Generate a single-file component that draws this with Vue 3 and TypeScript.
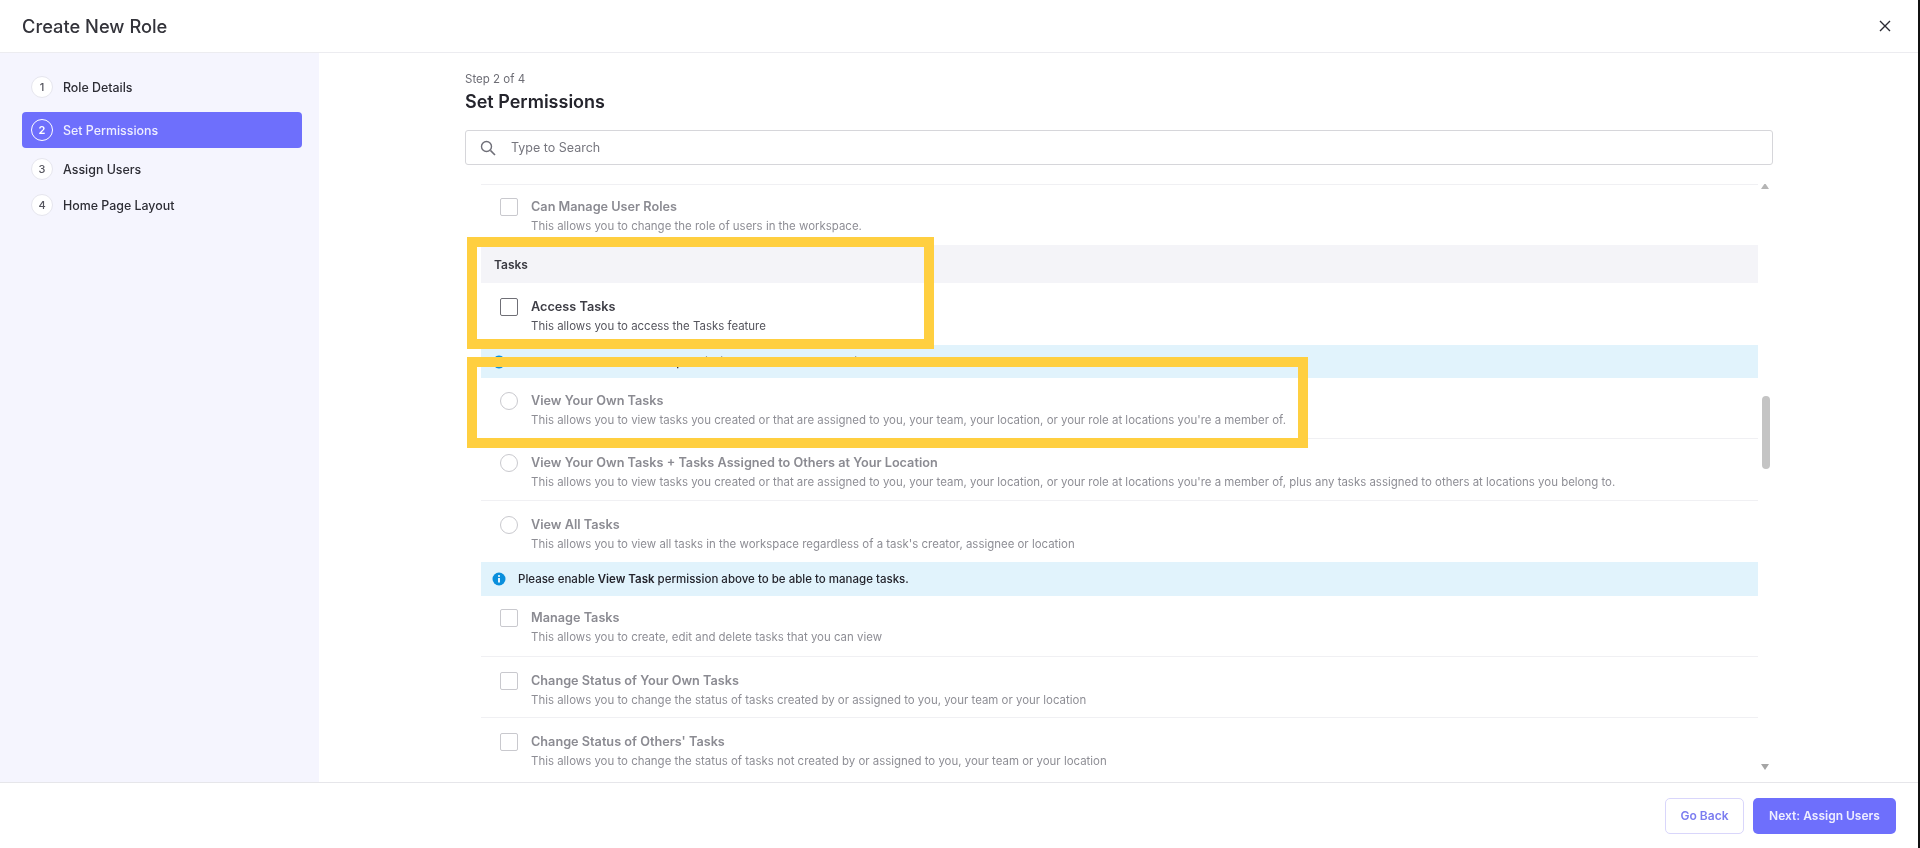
<script setup lang="ts">
interface Row { kind: 'check' | 'radio'; title: string; desc: string; plain?: boolean; tight?: boolean; first?: boolean }
const steps = ['Role Details', 'Set Permissions', 'Assign Users', 'Home Page Layout']
const views: Row[] = [
  { kind: 'radio', title: 'View Your Own Tasks', desc: "This allows you to view tasks you created or that are assigned to you, your team, your location, or your role at locations you're a member of." },
  { kind: 'radio', title: 'View Your Own Tasks + Tasks Assigned to Others at Your Location', desc: "This allows you to view tasks you created or that are assigned to you, your team, your location, or your role at locations you're a member of, plus any tasks assigned to others at locations you belong to." },
  { kind: 'radio', title: 'View All Tasks', desc: "This allows you to view all tasks in the workspace regardless of a task's creator, assignee or location", plain: true, tight: true },
]
const manages: Row[] = [
  { kind: 'check', title: 'Manage Tasks', desc: 'This allows you to create, edit and delete tasks that you can view', tight: true, first: true },
  { kind: 'check', title: 'Change Status of Your Own Tasks', desc: 'This allows you to change the status of tasks created by or assigned to you, your team or your location', tight: true },
  { kind: 'check', title: "Change Status of Others' Tasks", desc: 'This allows you to change the status of tasks not created by or assigned to you, your team or your location', plain: true, tight: true },
]
</script>

<template>
  <div class="page">
    <header class="top">
      <h1>Create New Role</h1>
      <svg class="close" viewBox="0 0 12 12" width="12" height="12"><path d="M1 1l10 10M11 1L1 11" fill="none" stroke="#2b2b33" stroke-width="1.4" /></svg>
    </header>
    <div class="middle">
      <aside class="side">
        <div v-for="(s, i) in steps" :key="s" class="step" :class="{ active: i === 1 }">
          <span class="num">{{ i + 1 }}</span>
          <span>{{ s }}</span>
        </div>
      </aside>
      <main class="content">
        <div class="kicker">Step 2 of 4</div>
        <h2>Set Permissions</h2>
        <div class="search">
          <svg viewBox="0 0 18 18" width="18" height="18"><circle cx="7.5" cy="7.5" r="5" fill="none" stroke="#6f6f78" stroke-width="1.4" /><path d="M11.4 11.4l4.6 4.6" stroke="#6f6f78" stroke-width="1.6" /></svg>
          <span>Type to Search</span>
        </div>
        <div class="scroller">
          <div class="list">
            <div class="row plain tight lead first-row">
              <span class="box" />
              <div><div class="title">Can Manage User Roles</div><div class="desc">This allows you to change the role of users in the workspace.</div></div>
            </div>
            <div class="section">Tasks</div>
            <div class="row strong plain access">
              <span class="box" />
              <div><div class="title">Access Tasks</div><div class="desc">This allows you to access the Tasks feature</div></div>
            </div>
            <div class="banner">
              <svg viewBox="0 0 14 14" width="14" height="14"><circle cx="7" cy="7" r="6.5" fill="#0a8fdc" /><circle cx="7" cy="4" r="1" fill="#fff" /><path d="M7 6v4.4" stroke="#fff" stroke-width="1.8" /></svg>
              <span>Please enable Access Tasks permission above to be able to view tasks.</span>
            </div>
            <div v-for="r in views" :key="r.title" class="row" :class="{ plain: r.plain, tight: r.tight }">
              <span class="radio" />
              <div><div class="title">{{ r.title }}</div><div class="desc">{{ r.desc }}</div></div>
            </div>
            <div class="banner second">
              <svg viewBox="0 0 14 14" width="14" height="14"><circle cx="7" cy="7" r="6.5" fill="#0a8fdc" /><circle cx="7" cy="4" r="1" fill="#fff" /><path d="M7 6v4.4" stroke="#fff" stroke-width="1.8" /></svg>
              <span>Please enable <b>View Task</b> permission above to be able to manage tasks.</span>
            </div>
            <div v-for="r in manages" :key="r.title" class="row" :class="{ plain: r.plain, tight: r.tight, lead: r.first }">
              <span class="box" />
              <div><div class="title">{{ r.title }}</div><div class="desc">{{ r.desc }}</div></div>
            </div>
          </div>
          <div class="bar">
            <i class="up" />
            <i class="thumb" />
            <i class="down" />
          </div>
        </div>
      </main>
    </div>
    <footer class="foot">
      <button class="ghost">Go Back</button>
      <button class="primary">Next: Assign Users</button>
    </footer>
    <div class="mark one" />
    <div class="mark two" />
  </div>
</template>

<style>
html, body { margin: 0; background: #fff; }
</style>

<style scoped>
.page {
  position: relative;
  width: 1920px;
  height: 848px;
  box-sizing: border-box;
  border-right: 2px solid #111;
  display: flex;
  flex-direction: column;
  overflow: hidden;
  font-family: Inter, "Liberation Sans", sans-serif;
  background: #fff;
  color: #24242c;
  filter: blur(0.4px);
}
.top {
  height: 52px;
  flex: none;
  border-bottom: 1px solid #ececf0;
  display: flex;
  align-items: center;
  justify-content: space-between;
  padding: 0 27px 0 22px;
}
h1 { margin: 0; font-size: 18.3px; font-weight: 500; color: #33333a; }
.middle { flex: 1; display: flex; min-height: 0; }
.side {
  width: 319px;
  flex: none;
  box-sizing: border-box;
  background: #f5f5fe;
  padding: 16px 17px 0 22px;
}
.step {
  height: 36px;
  display: flex;
  align-items: center;
  gap: 10px;
  padding-left: 9px;
  font-size: 12.4px;
  font-weight: 500;
  color: #2d2d35;
  border-radius: 4px;
}
.step.active {
  background: #6e6ffc;
  color: #eef;
  margin: 7px 0 3px;
}
.num {
  width: 22px;
  height: 22px;
  box-sizing: border-box;
  border-radius: 50%;
  background: #fff;
  border: 1px solid #e6e6ee;
  display: flex;
  align-items: center;
  justify-content: center;
  font-size: 11px;
  color: #55555e;
}
.active .num { background: transparent; border: 1.5px solid #fff; color: #fff; font-weight: 600; }
.content {
  flex: 1;
  min-width: 0;
  box-sizing: border-box;
  padding: 19px 145px 0 146px;
  display: flex;
  flex-direction: column;
}
.kicker { font-size: 11.5px; line-height: 15px; color: #6d6d75; }
h2 { margin: 3px 0 0; font-size: 18px; line-height: 24px; font-weight: 600; color: #24242c; }
.search {
  margin-top: 16px;
  height: 35px;
  flex: none;
  box-sizing: border-box;
  border: 1px solid #d6d6da;
  border-radius: 3px;
  display: flex;
  align-items: center;
  gap: 14px;
  padding-left: 13px;
  font-size: 12.5px;
  color: #76767e;
}
.scroller {
  margin-top: 19px;
  flex: 1;
  min-height: 0;
  display: flex;
  padding: 0 3px 0 16px;
  overflow: hidden;
}
.list { flex: 1; min-width: 0; border-top: 1px solid #f0f0f3; }
.row {
  height: 62px;
  box-sizing: border-box;
  display: flex;
  align-items: flex-start;
  gap: 13px;
  padding: 14.5px 0 0 19px;
  border-bottom: 1px solid #f0f0f3;
}
.row.plain { border-bottom: 0; }
.row.tight { height: 61px; }
.banner + .row { height: 61px; padding-top: 13.5px; }
.row.lead { padding-top: 13px; }
.row.first-row { height: 60px; }
.box {
  width: 18px;
  height: 18px;
  box-sizing: border-box;
  flex: none;
  border: 1.5px solid #c9c9ce;
  border-radius: 2px;
}
.strong .box { border-color: #6f6f76; }
.radio {
  width: 18px;
  height: 18px;
  box-sizing: border-box;
  flex: none;
  border: 1.5px solid #c9c9ce;
  border-radius: 50%;
}
.title { font-size: 12.7px; line-height: 17px; font-weight: 600; color: #8b8b92; }
.desc { font-size: 11.45px; line-height: 17px; margin-top: 3px; color: #8e8e95; white-space: nowrap; }
.strong .title { color: #3d3d45; }
.strong .desc { color: #55555d; }
.section {
  height: 38px;
  display: flex;
  align-items: center;
  padding-left: 13px;
  background: #f4f4f8;
  font-size: 12px;
  font-weight: 600;
  color: #3a3a42;
}
.banner {
  height: 33px;
  display: flex;
  align-items: center;
  gap: 12px;
  padding-left: 11px;
  background: #e1f3fc;
  font-size: 11.5px;
  font-weight: 500;
  color: #24242c;
}
.banner b { font-weight: 600; }
.banner.second { height: 34px; }
.bar {
  width: 9px;
  margin-left: 3px;
  flex: none;
  position: relative;
}
.thumb {
  position: absolute;
  left: 0.5px;
  top: 212px;
  width: 8px;
  height: 73px;
  border-radius: 4px;
  background: #c4c4c4;
}
.up, .down {
  position: absolute;
  left: 0;
  width: 0;
  height: 0;
  border-left: 4.5px solid transparent;
  border-right: 4.5px solid transparent;
}
.up { top: -1px; border-bottom: 6.5px solid #b5b5b5; }
.down { top: 580px; border-top: 6.5px solid #a5a5a5; }
.foot {
  height: 66px;
  flex: none;
  box-sizing: border-box;
  border-top: 1px solid #e6e6ea;
  display: flex;
  justify-content: flex-end;
  align-items: center;
  gap: 9px;
  padding: 0 22px 0 0;
}
button {
  height: 36px;
  border-radius: 5px;
  font-family: inherit;
  font-size: 12px;
  font-weight: 600;
}
.ghost { width: 79px; background: #fff; border: 1.5px solid #d9d6fb; color: #7b7cf0; }
.primary { width: 143px; background: #6e6ffc; border: 0; color: #eeeeff; }
.mark {
  position: absolute;
  box-sizing: border-box;
  border: 10px solid #ffcf40;
  pointer-events: none;
}
.mark.one { left: 467px; top: 237px; width: 467px; height: 112px; }
.mark.two { left: 467px; top: 357px; width: 841px; height: 91px; }
</style>
